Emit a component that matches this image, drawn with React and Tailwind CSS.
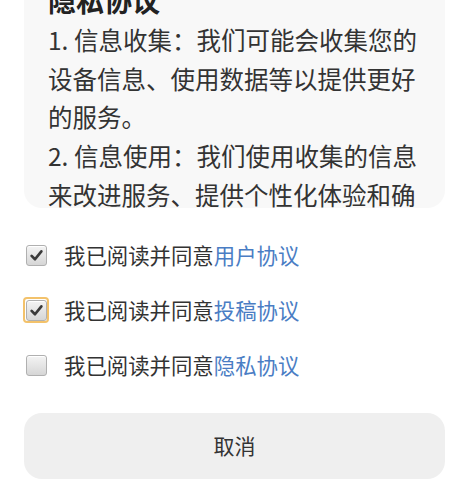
import React, { useState } from "react";

const CheckMark = () => (
    <svg viewBox="0 0 20 20" className="w-[15px] h-[15px]">
        <path d="M3.5 10.5 L8 15 L16.5 4.5" fill="none" stroke="#3a3a3a" strokeWidth="3.6" strokeLinecap="round" strokeLinejoin="round" />
    </svg>
);

const Checkbox = ({ checked, focused, onChange }) => (
    <button
        onClick={onChange}
        className={`w-[26px] h-[26px] flex items-center justify-center rounded-[4px] ${focused ? "border-2 border-[#f3c26b]" : "border-2 border-transparent"}`}
    >
        <span className="w-[21px] h-[21px] shrink-0 rounded-[3px] border border-[#b0b0b0] bg-gradient-to-b from-[#f4f4f4] to-[#d6d6d6] shadow-[inset_0_1px_0_#ffffff] flex items-center justify-center">
            {checked && <CheckMark />}
        </span>
    </button>
);

const App = () => {
    const [agree, setAgree] = useState({ user: true, post: true, privacy: false });

    const rows = [
        { key: "user", label: "用户协议" },
        { key: "post", label: "投稿协议", focused: true },
        { key: "privacy", label: "隐私协议" },
    ];

    return (
        <div className="w-[472px] h-[489px] bg-white overflow-hidden text-[#333333] font-['Noto_Sans_CJK_SC','Noto_Sans',sans-serif]">
            <div className="ml-6 mr-[27px] h-[208px] bg-[#f8f8f8] rounded-b-[18px] overflow-hidden">
                <div className="px-6 -mt-[19px]">
                    <h2 className="font-bold text-[28px] leading-[38px] text-[#222222]">隐私协议</h2>
                    <p className="text-[24.5px] leading-[38.7px] mt-[2px]">
                        1. 信息收集：我们可能会收集您的设备信息、使用数据等以提供更好的服务。
                    </p>
                    <p className="text-[24.5px] leading-[38.7px]">
                        2. 信息使用：我们使用收集的信息来改进服务、提供个性化体验和确保安全。
                    </p>
                </div>
            </div>

            <div className="flex flex-col gap-[29px] mt-[34px] px-[23px]">
                {rows.map((row) => (
                    <label key={row.key} className="flex items-center gap-[15px] h-[26px]">
                        <Checkbox
                            checked={agree[row.key]}
                            focused={row.focused}
                            onChange={() => setAgree((prev) => ({ ...prev, [row.key]: !prev[row.key] }))}
                        />
                        <span className="text-[21.4px] leading-none">
                            我已阅读并同意<span className="text-[#4a7dc4]">{row.label}</span>
                        </span>
                    </label>
                ))}
            </div>

            <div className="ml-6 mr-[27px] mt-[35px]">
                <button className="w-full h-[66px] rounded-[18px] bg-[#efefef] text-[21px] text-[#333333]">
                    取消
                </button>
            </div>
        </div>
    );
};

export default App;
